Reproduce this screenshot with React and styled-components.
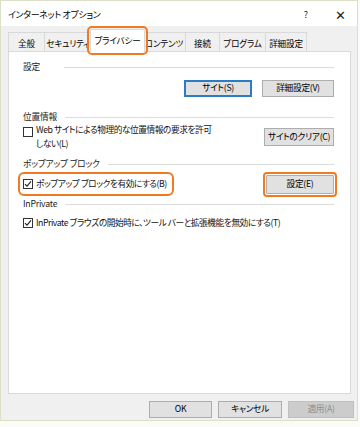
import React from "react";
import styled, { createGlobalStyle, css } from "styled-components";

const GlobalStyle = createGlobalStyle`
  html, body { margin: 0; padding: 0; background: #fbfbf7; }
  body {
    font-family: "Noto Sans CJK JP", "Noto Sans", sans-serif;
    font-feature-settings: "palt";
    color: #000;
  }
`;

const Window = styled.div`
  width: 356px;
  height: 419px;
  border: 1px solid #dbe0c8;
  background: #f0f0f0;
  display: flex;
  flex-direction: column;
`;

const TitleBar = styled.div`
  height: 25px;
  background: #ffffff;
  display: flex;
  align-items: center;
  padding: 0 4px 0 7px;
  font-size: 9px;
  line-height: 1;
`;

const Title = styled.div`
  flex: 1;
  margin-top: 2px;
  letter-spacing: -0.35px;
`;

const TitleButton = styled.div`
  width: 26px;
  text-align: center;
  font-size: ${(p) => p.$size || 10}px;
  margin-right: ${(p) => p.$mr || 0}px;
  color: #222;
  margin-top: 1px;
`;

const Body = styled.div`
  padding: 3px 0 0 7px;
  display: flex;
  flex-direction: column;
  flex: 1;
`;

const TabStrip = styled.div`
  display: flex;
  align-items: flex-end;
  height: 22px;
  position: relative;
  z-index: 1;
`;

const Tab = styled.div`
  box-sizing: border-box;
  width: ${(p) => p.$w}px;
  height: 19px;
  border: 1px solid #d9d9d9;
  border-bottom: none;
  border-left-width: ${(p) => (p.$first ? 1 : 0)}px;
  background: #f0f0f0;
  font-size: 8.6px;
  letter-spacing: -0.2px;
  display: flex;
  align-items: center;
  justify-content: center;
  white-space: nowrap;
  padding-top: 1px;
  ${(p) =>
    p.$active &&
    css`
      height: 23px;
      margin: 0 -2px 0 -2px;
      border-left-width: 1px;
      background: #ffffff;
      position: relative;
      z-index: 2;
      align-items: flex-start;
      padding-top: 4px;
      outline: 2.5px solid #ee7b23;
      outline-offset: 1px;
      border-radius: 2px;
      margin-bottom: -1px;
    `}
`;

const Panel = styled.div`
  box-sizing: border-box;
  width: 343px;
  height: 343px;
  background: #ffffff;
  border: 1px solid #d9d9d9;
  padding: 9px 16px 0 14px;
  display: flex;
  flex-direction: column;
  font-size: 8.7px;
`;

const SectionHeader = styled.div`
  display: flex;
  align-items: center;
  height: 12px;
  line-height: 12px;
  margin-top: ${(p) => p.$mt || 0}px;
  color: #1a1a1a;
  letter-spacing: -0.2px;
  &::after {
    content: "";
    flex: 1;
    height: 1px;
    background: #dcdcdc;
    margin-left: ${(p) => p.$gap || 8}px;
    margin-top: 1px;
  }
`;

const Row = styled.div`
  display: flex;
  align-items: ${(p) => p.$align || "center"};
  justify-content: ${(p) => p.$justify || "flex-start"};
  gap: ${(p) => p.$gap || 0}px;
  margin-top: ${(p) => p.$mt || 0}px;
  min-height: ${(p) => p.$h || 0}px;
`;

const Button = styled.button`
  box-sizing: border-box;
  width: ${(p) => p.$w}px;
  height: ${(p) => p.$h || 17}px;
  background: ${(p) => (p.disabled ? "#cccccc" : "#e1e1e1")};
  border: 1px solid ${(p) => (p.$default ? "#2b7cc4" : p.disabled ? "#bfbfbf" : "#adadad")};
  ${(p) => p.$default && css`box-shadow: inset 0 0 0 1px #2b7cc4;`}
  color: ${(p) => (p.disabled ? "#8d8d8d" : "#000")};
  font-family: inherit;
  font-feature-settings: "palt";
  font-size: 8.7px;
  letter-spacing: -0.3px;
  padding: 0;
  line-height: 1;
  flex-shrink: 0;
  ${(p) =>
    p.$highlight &&
    css`
      outline: 2.5px solid #ee7b23;
      outline-offset: 1.5px;
      border-radius: 1px;
    `}
`;

const CheckLabel = styled.label`
  display: inline-flex;
  align-items: ${(p) => (p.$multi ? "flex-start" : "center")};
  gap: 3px;
  line-height: 14px;
  letter-spacing: -0.45px;
  color: #111;
  ${(p) =>
    p.$highlight &&
    css`
      margin: -5px -7px -5px -5px;
      padding: 3px 5px 3px 3px;
      border: 2.5px solid #ee7b23;
      border-radius: 6px;
    `}
`;

const Box = styled.span`
  box-sizing: border-box;
  width: 10px;
  height: 10px;
  border: 1px solid #333;
  background: #fff;
  flex-shrink: 0;
  display: inline-flex;
  align-items: center;
  justify-content: center;
  margin-top: ${(p) => p.$mt || 0}px;
`;

const TextBlock = styled.span`
  display: block;
  width: ${(p) => p.$w || "auto"};
`;

const Footer = styled.div`
  display: flex;
  justify-content: flex-end;
  gap: 6px;
  padding: 7px 3px 0 0;
`;

function Checkbox({ checked, mt }) {
  return (
    <Box $mt={mt}>
      {checked && (
        <svg width="8" height="8" viewBox="0 0 8 8">
          <path d="M1 4.2 L3 6.2 L7 1.3" fill="none" stroke="#222" strokeWidth="1.1" />
        </svg>
      )}
    </Box>
  );
}

const tabs = [
  { label: "全般", w: 37 },
  { label: "セキュリティ", w: 47 },
  { label: "プライバシー", w: 55, active: true },
  { label: "コンテンツ", w: 43 },
  { label: "接続", w: 34 },
  { label: "プログラム", w: 46 },
  { label: "詳細設定", w: 41 },
];

export default function App() {
  return (
    <>
      <GlobalStyle />
      <Window>
        <TitleBar>
          <Title>インターネット オプション</Title>
          <TitleButton $size={9} $mr={8}>?</TitleButton>
          <TitleButton $size={13}>✕</TitleButton>
        </TitleBar>
        <Body>
          <TabStrip>
            {tabs.map((t, i) => (
              <Tab key={t.label} $w={t.w} $first={i === 0} $active={t.active}>
                {t.label}
              </Tab>
            ))}
          </TabStrip>
          <Panel>
            <SectionHeader $gap={24}>設定</SectionHeader>
            <Row $mt={7} $justify="flex-end" $gap={10}>
              <Button $w={68} $default>サイト(S)</Button>
              <Button $w={72}>詳細設定(V)</Button>
            </Row>

            <SectionHeader $mt={14}>位置情報</SectionHeader>
            <Row $mt={0} $justify="space-between">
              <CheckLabel $multi>
                <Checkbox mt={4} />
                <TextBlock $w="205px">
                  Web サイトによる物理的な位置情報の要求を許可
                  <br />
                  しない(L)
                </TextBlock>
              </CheckLabel>
              <Button $w={70} $h={18}>サイトのクリア(C)</Button>
            </Row>

            <SectionHeader $mt={7}>ポップアップ ブロック</SectionHeader>
            <Row $mt={4} $h={20} $justify="space-between">
              <CheckLabel $highlight>
                <Checkbox checked />
                <span>ポップアップ ブロックを有効にする(B)</span>
              </CheckLabel>
              <Button $w={68} $h={19} $highlight>設定(E)</Button>
            </Row>

            <SectionHeader $mt={4}>InPrivate</SectionHeader>
            <Row $mt={6}>
              <CheckLabel>
                <Checkbox checked />
                <span>InPrivate ブラウズの開始時に、ツール バーと拡張機能を無効にする(T)</span>
              </CheckLabel>
            </Row>
          </Panel>
          <Footer>
            <Button $w={63}>OK</Button>
            <Button $w={64}>キャンセル</Button>
            <Button $w={66} disabled>適用(A)</Button>
          </Footer>
        </Body>
      </Window>
    </>
  );
}
